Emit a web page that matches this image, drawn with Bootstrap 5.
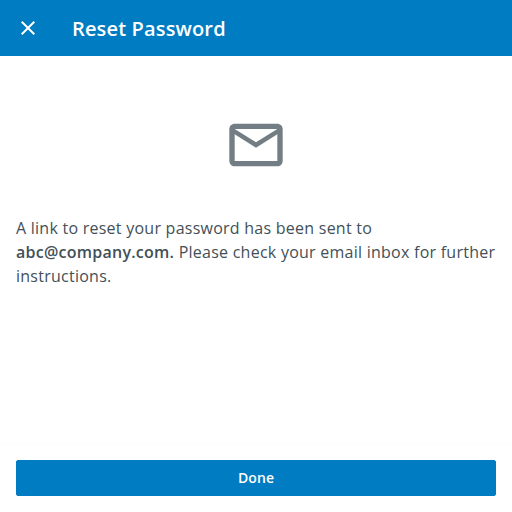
<!DOCTYPE html>
<html lang="en">
<head>
<meta charset="utf-8">
<meta name="viewport" content="width=device-width, initial-scale=1">
<title>Reset Password</title>
<link href="https://cdn.jsdelivr.net/npm/bootstrap@5.3.0/dist/css/bootstrap.min.css" rel="stylesheet">
<style>
body { font-family: "Open Sans", sans-serif; color: #435057; }
.app-bar { height: 56px; background: #007cc2; }
.app-title { font-size: 20px; font-weight: 600; line-height: 28px; margin-left: 32px; padding-top: 2px; letter-spacing: .15px; }
.mail-icon { margin-top: 57px; }
.message { font-size: 16px; line-height: 24px; margin-top: 39px; letter-spacing: .25px; }
.message strong { font-weight: 600; }
.action-bar { border-top: 1px solid #fcfcfc; padding-top: 16px; }
.btn-done { --bs-btn-bg: #007cc2; --bs-btn-border-color: #007cc2; --bs-btn-color: #fff; --bs-btn-hover-bg: #006cab; --bs-btn-hover-color: #fff; height: 36px; font-size: 14px; font-weight: 600; line-height: 32px; border-radius: 2px; letter-spacing: .1px; }
</style>
</head>
<body class="vh-100 d-flex flex-column bg-white overflow-hidden">
<header class="app-bar d-flex align-items-center px-3 text-white flex-shrink-0">
<button type="button" class="btn p-0 border-0 text-white d-flex" aria-label="Close">
<svg width="24" height="24" viewBox="0 0 24 24" fill="currentColor"><path d="M19 6.41 17.59 5 12 10.59 6.41 5 5 6.41 10.59 12 5 17.59 6.41 19 12 13.41 17.59 19 19 17.59 13.41 12z"/></svg>
</button>
<h1 class="app-title mb-0">Reset Password</h1>
</header>
<main class="flex-grow-1 d-flex flex-column px-3">
<svg class="mail-icon mx-auto flex-shrink-0" width="64" height="64" viewBox="0 0 24 24" fill="#727e84"><path d="M22 6c0-1.100-.9-2-2-2H4c-1.100 0-2 .9-2 2v12c0 1.100.9 2 2 2h16c1.100 0 2-.9 2-2V6zm-2 0-8 5-8-5h16zm0 12H4V8l8 5 8-5v10z"/></svg>
<p class="message mb-0">A link to reset your password has been sent to <strong>abc@company.com.</strong> Please check your email inbox for further instructions.</p>
</main>
<footer class="action-bar px-3 pb-3">
<button type="button" class="btn btn-done w-100 d-block py-0">Done</button>
</footer>
<script src="https://cdn.jsdelivr.net/npm/bootstrap@5.3.0/dist/js/bootstrap.bundle.min.js"></script>
</body>
</html>
